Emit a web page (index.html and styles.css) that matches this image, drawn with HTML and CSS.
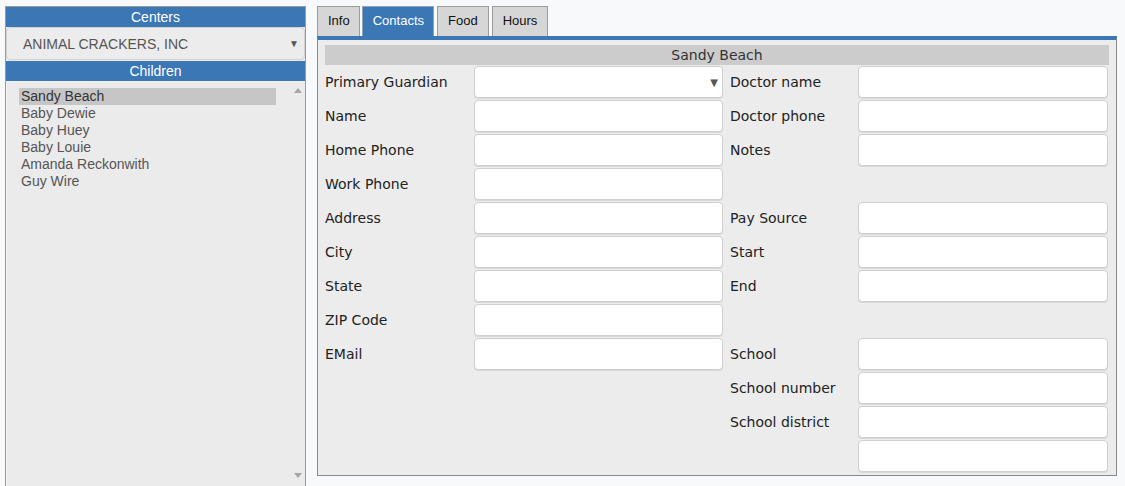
FILE: index.html
```html
<!DOCTYPE html>
<html>
<head>
<meta charset="utf-8">
<link rel="stylesheet" href="styles.css">
</head>
<body>
<div class="page">
  <aside class="side">
    <div class="side-head">Centers</div>
    <div class="center-select"><span>ANIMAL CRACKERS, INC</span><span class="arrow">▼</span></div>
    <div class="side-head">Children</div>
    <div class="kids">
      <ul class="kid-list">
        <li class="sel">Sandy Beach</li>
        <li>Baby Dewie</li>
        <li>Baby Huey</li>
        <li>Baby Louie</li>
        <li>Amanda Reckonwith</li>
        <li>Guy Wire</li>
      </ul>
      <div class="scroll">
        <span class="up"></span>
        <span class="down"></span>
      </div>
    </div>
  </aside>
  <main class="main">
    <nav class="tabs">
      <div class="tab">Info</div>
      <div class="tab active">Contacts</div>
      <div class="tab">Food</div>
      <div class="tab">Hours</div>
    </nav>
    <section class="panel">
      <div class="title">Sandy Beach</div>
      <div class="form">
        <label>Primary Guardian</label><div class="inp select"><span class="arrow">▼</span></div>
        <label class="r">Doctor name</label><div class="inp"></div>

        <label>Name</label><div class="inp"></div>
        <label class="r">Doctor phone</label><div class="inp"></div>

        <label>Home Phone</label><div class="inp"></div>
        <label class="r">Notes</label><div class="inp"></div>

        <label>Work Phone</label><div class="inp"></div>
        <label class="r"></label><div></div>

        <label>Address</label><div class="inp"></div>
        <label class="r">Pay Source</label><div class="inp"></div>

        <label>City</label><div class="inp"></div>
        <label class="r">Start</label><div class="inp"></div>

        <label>State</label><div class="inp"></div>
        <label class="r">End</label><div class="inp"></div>

        <label>ZIP Code</label><div class="inp"></div>
        <label class="r"></label><div></div>

        <label>EMail</label><div class="inp"></div>
        <label class="r">School</label><div class="inp"></div>

        <label></label><div></div>
        <label class="r">School number</label><div class="inp"></div>

        <label></label><div></div>
        <label class="r">School district</label><div class="inp"></div>

        <label></label><div></div>
        <label class="r"></label><div class="inp"></div>
      </div>
    </section>
  </main>
</div>
</body>
</html>
```

FILE: styles.css
```css
html, body {
  margin: 0;
  padding: 0;
  height: 486px;
  overflow: hidden;
}
body {
  background: #f8f9fa;
  font-family: "Liberation Sans", Arial, sans-serif;
}
.page {
  display: flex;
  align-items: flex-start;
  padding: 6px 0 0 5px;
}
.side {
  width: 299px;
  border: 1px solid #9a9a9a;
  border-bottom: none;
  background: #ebebeb;
  height: 500px;
  display: flex;
  flex-direction: column;
}
.side-head {
  background: #3b76b5;
  color: #fff;
  font-size: 14px;
  text-align: center;
  height: 20px;
  line-height: 20px;
}
.center-select {
  box-sizing: border-box;
  height: 33px;
  margin: 0 0 1px 0;
  border: 1px solid #d2d2d2;
  border-radius: 4px;
  background: #ececec;
  display: flex;
  align-items: center;
  justify-content: space-between;
  padding: 0 5px 0 16px;
  color: #555;
  font-size: 14px;
}
.arrow {
  font-size: 10px;
  color: #555;
}
.kids {
  flex: 1;
  display: flex;
  border-left: 1px solid #f4f4f4;
  border-top: 1px solid #f2f2f2;
}
.kid-list {
  list-style: none;
  margin: 0;
  padding: 6px 0 0 12px;
  width: 257px;
  font-size: 14px;
  line-height: 17px;
  color: #555;
}
.kid-list li {
  padding-left: 2px;
}
.kid-list li.sel {
  background: #c6c6c6;
  color: #333;
}
.scroll {
  flex: 1;
  position: relative;
}
.up, .down {
  position: absolute;
  left: 18px;
  width: 0;
  height: 0;
  border-left: 4px solid transparent;
  border-right: 4px solid transparent;
}
.up {
  top: 6px;
  border-bottom: 5px solid #a6a6a6;
}
.down {
  top: 391px;
  border-top: 5px solid #a6a6a6;
}
.main {
  margin-left: 11px;
  width: 800px;
}
.tabs {
  display: flex;
  gap: 2px;
  height: 30px;
}
.tab {
  box-sizing: border-box;
  height: 30px;
  line-height: 28px;
  border: 1px solid #9c9c9c;
  border-bottom: none;
  background: #d6d6d6;
  color: #111;
  font-size: 13px;
  padding: 0 10px;
  margin-right: 1px;
}
.tab:first-child {
  margin-right: 0;
  padding: 0 9px 0 10px;
}
.tab.active {
  background: #3b76b5;
  border-color: #8ea3bb;
  color: #fff;
  padding: 0 9px 0 10px;
}
.panel {
  border-top: 4px solid #3b76b5;
  border-left: 1px solid #8a8a8a;
  border-right: 1px solid #8a8a8a;
  border-bottom: 1px solid #8a8a8a;
  background: #ececec;
  padding: 5px 7px 3px 7px;
  height: 427px;
}
.title {
  background: #cccccc;
  color: #333;
  font-family: "DejaVu Sans", Verdana, sans-serif;
  font-size: 14px;
  height: 20px;
  line-height: 20px;
  text-align: center;
  margin-bottom: 1px;
}
.form {
  display: grid;
  grid-template-columns: 149px 249px 135px 250px;
  grid-auto-rows: 34px;
  font-family: "DejaVu Sans", Verdana, sans-serif;
  font-size: 14px;
  color: #222;
}
.form label {
  display: flex;
  align-items: center;
  height: 32px;
}
.form label.r {
  padding-left: 7px;
}
.inp {
  box-sizing: border-box;
  height: 32px;
  background: #fff;
  border: 1px solid #cfcfcf;
  border-radius: 4px;
  box-shadow: 0 1px 0 #d8d8d8;
}
.inp.select {
  display: flex;
  align-items: center;
  justify-content: flex-end;
  padding-right: 4px;
}
```
